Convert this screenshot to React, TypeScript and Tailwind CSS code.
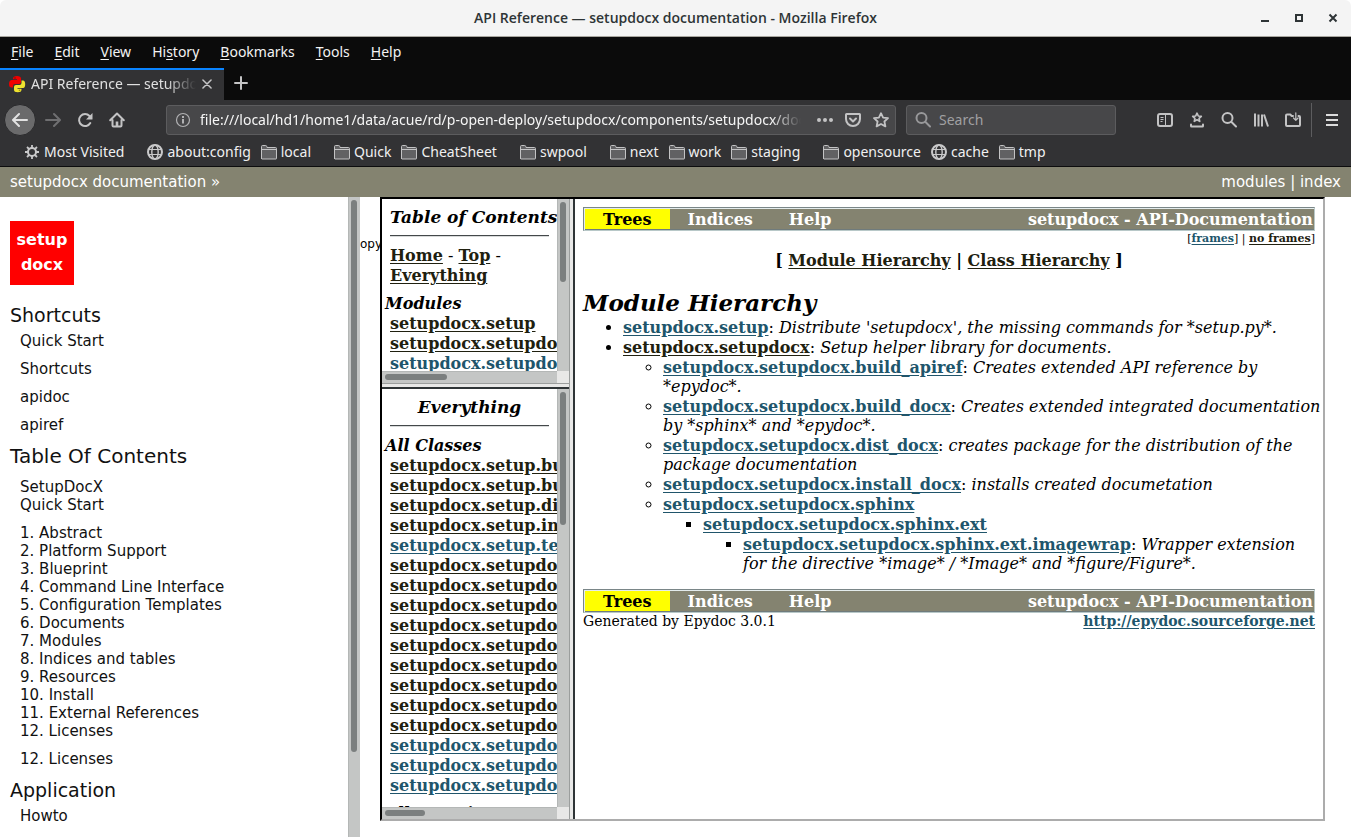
import type { ReactNode } from "react";

const moduleLinks = [
  { name: "setupdocx.setup", fresh: false },
  { name: "setupdocx.setupdocx", fresh: false },
  { name: "setupdocx.setupdocx.build_apiref", fresh: true },
];

const classLinks = [
  { name: "setupdocx.setup.build_docx", fresh: false },
  { name: "setupdocx.setup.build_apiref", fresh: false },
  { name: "setupdocx.setup.dist_docx", fresh: false },
  { name: "setupdocx.setup.install_docx", fresh: false },
  { name: "setupdocx.setup.testx", fresh: true },
  ...Array.from({ length: 9 }, () => ({ name: "setupdocx.setupdocx", fresh: false })),
  ...Array.from({ length: 3 }, () => ({ name: "setupdocx.setupdocx", fresh: true })),
];

const contents = [
  "Abstract",
  "Platform Support",
  "Blueprint",
  "Command Line Interface",
  "Configuration Templates",
  "Documents",
  "Modules",
  "Indices and tables",
  "Resources",
  "Install",
  "External References",
];

const menus = [
  ["", "F", "ile"],
  ["", "E", "dit"],
  ["", "V", "iew"],
  ["Hi", "s", "tory"],
  ["", "B", "ookmarks"],
  ["", "T", "ools"],
  ["", "H", "elp"],
];

type Mark = { icon: "gear" | "globe" | "folder"; label: string };
const bookmarkGroups: Mark[][] = [
  [{ icon: "gear", label: "Most Visited" }],
  [{ icon: "globe", label: "about:config" }, { icon: "folder", label: "local" }],
  [{ icon: "folder", label: "Quick" }, { icon: "folder", label: "CheatSheet" }],
  [{ icon: "folder", label: "swpool" }],
  [{ icon: "folder", label: "next" }, { icon: "folder", label: "work" }, { icon: "folder", label: "staging" }],
  [{ icon: "folder", label: "opensource" }, { icon: "globe", label: "cache" }, { icon: "folder", label: "tmp" }],
];

function Icon({ children, className = "h-4 w-4" }: { children: ReactNode; className?: string }) {
  return (
    <svg
      viewBox="0 0 16 16"
      className={`shrink-0 ${className}`}
      fill="none"
      stroke="currentColor"
      strokeWidth="2"
      strokeLinecap="round"
      strokeLinejoin="round"
      aria-hidden="true"
    >
      {children}
    </svg>
  );
}

function BookmarkIcon({ kind }: { kind: Mark["icon"] }) {
  if (kind === "gear")
    return (
      <Icon className="h-4 w-4 text-[#c9c9ca]">
        <circle cx="8" cy="8" r="4" />
        <path
          strokeWidth="1.8"
          strokeLinecap="butt"
          d="M8 4V1M8 12v3M4 8H1M12 8h3M5.2 5.2 3 3M10.8 10.8 13 13M5.2 10.8 3 13M10.8 5.2 13 3"
        />
      </Icon>
    );
  if (kind === "globe")
    return (
      <Icon className="h-4 w-4 text-[#c9c9ca]">
        <circle cx="8" cy="8" r="7" />
        <ellipse cx="8" cy="8" rx="3.2" ry="7" strokeWidth="1.4" />
        <path strokeWidth="1.2" d="M1.5 5.5h13M1.5 10.5h13" />
      </Icon>
    );
  return (
    <Icon className="h-4 w-4 text-[#c3c3c4]">
      <path
        strokeWidth="1"
        fill="#616163"
        d="M.5 14.500v-12q0-1 1-1h3.200q.8 0 1 .8l.3 1.200h8.500q1 0 1 1v10q0 .5-.5.5H1q-.5 0-.5-.5z"
      />
      <path strokeWidth="1" d="M1 5.500h14" />
    </Icon>
  );
}

function ALink({ fresh = false, children }: { fresh?: boolean; children: ReactNode }) {
  return (
    <a
      href="#"
      className={`font-bold underline underline-offset-2 ${fresh ? "text-[#20556b]" : "text-[#20200f]"}`}
    >
      {children}
    </a>
  );
}

function Rule() {
  return <hr className="my-2 h-0.5 border-t border-b border-t-[#44484a] border-b-[#d8dada]" />;
}

function GroupTitle({ children }: { children: ReactNode }) {
  return <h3 className="-ml-[5px] leading-[21px] font-bold italic">{children}</h3>;
}

function SideFrame({ children, thumb }: { children: ReactNode; thumb: ReactNode }) {
  return (
    <div className="flex min-h-0 flex-1">
      <div className="min-w-0 flex-1 overflow-hidden px-2 pt-2 whitespace-nowrap">{children}</div>
      <div className="w-3 shrink-0 border-l border-[#b4b7b6] bg-[#c4c6c5] pt-[3px] pl-0.5">{thumb}</div>
    </div>
  );
}

function BottomScroll({ thumb }: { thumb: ReactNode }) {
  return (
    <div className="flex h-3 shrink-0">
      <div className="flex flex-1 items-start border-t border-[#b4b7b6] bg-[#c4c6c5] pt-0.5 pl-[3px]">{thumb}</div>
      <div className="w-3 bg-[#e8e8e7]" />
    </div>
  );
}

function EpydocNav() {
  return (
    <nav className="flex h-6 border border-t-[#7a8688] border-r-[#b8c8c8] border-b-[#b8c8c8] border-l-[#7a8688] bg-[#848370] p-px leading-[22px] font-bold whitespace-nowrap text-white shadow-[inset_1px_1px_0_#e4ecec,inset_0_-1px_0_#6f7b7c]">
      <span className="bg-[#ffff00] px-[18px] text-black">Trees</span>
      <a href="#" className="px-[18px]">Indices</a>
      <a href="#" className="px-[18px]">Help</a>
      <span className="ml-auto">setupdocx - API-Documentation</span>
    </nav>
  );
}

function Entry({ name, fresh = true, children }: { name: string; fresh?: boolean; children?: ReactNode }) {
  return (
    <div className="pb-px leading-[19px] whitespace-nowrap">
      <ALink fresh={fresh}>{name}</ALink>
      {children && <>: <em>{children}</em></>}
    </div>
  );
}

function SideText({ children }: { children: ReactNode }) {
  return (
    <p className="mb-2.5 ml-2.5 leading-[18px]">
      <a href="#">{children}</a>
    </p>
  );
}

function TitleBar() {
  return (
    <header className="flex h-[37px] shrink-0 items-center rounded-t-md border-b border-[#a8a69f] bg-[#f4f4f4] px-2.5 text-[#2e3436]">
      <div className="flex-1" />
      <h1 className="font-['Open_Sans',sans-serif] text-sm font-semibold">
        API Reference — setupdocx documentation - Mozilla Firefox
      </h1>
      <div className="flex flex-1 justify-end gap-[18px]">
        <button aria-label="Minimize">
          <Icon><path strokeLinecap="butt" d="M4 11h8" /></Icon>
        </button>
        <button aria-label="Maximize">
          <Icon><path strokeLinejoin="miter" d="M5 5h6v6H5z" /></Icon>
        </button>
        <button aria-label="Close window">
          <Icon><path strokeLinecap="butt" d="m4.500 4.500 7 7M11.500 4.500l-7 7" /></Icon>
        </button>
      </div>
    </header>
  );
}

function Chrome() {
  return (
    <>
      <nav className="flex h-[31px] shrink-0 items-center gap-[21px] bg-[#0b0b0b] px-[11px] pb-0.5 text-sm text-[#f3f3f3]">
        {menus.map(([before, key, after]) => (
          <button key={after}>
            {before}
            <span className="underline underline-offset-2">{key}</span>
            {after}
          </button>
        ))}
      </nav>
      <div className="flex h-8 shrink-0 items-stretch bg-[#0b0b0b] text-sm text-[#e0e0e0]">
        <div className="flex w-56 items-center border-t-2 border-[#0a84ff] bg-[#323234] pr-3 pb-0.5 pl-2">
          <svg viewBox="0 0 18 18" className="mr-[5px] h-[18px] w-[18px] shrink-0" aria-hidden="true">
            <path
              fill="#f00000"
              d="M5 3.500Q5 1 9 1t4 2.500V7q0 2-2 2H7Q5 9 5 11v1.500H3.500Q1 12.500 1 9t2.500-4H9v-.7H5z"
            />
            <path
              fill="#efe32f"
              d="M13.500 5.500H15q2.200 0 2.200 3.800T15 13H9.500v.8h4v.9q0 2.500-3.800 2.500T6 14.700V12q0-2 2-2h3.500q2 0 2-2z"
            />
            <circle cx="7" cy="3" r=".8" fill="#900" />
            <circle cx="11.500" cy="15.200" r=".8" fill="#998f10" />
          </svg>
          <span className="flex-1 overflow-hidden mask-[linear-gradient(to_right,black_82%,transparent)] whitespace-nowrap">
            API Reference — setupdocx documentation
          </span>
          <button aria-label="Close tab" className="ml-1.5">
            <Icon className="h-2.5 w-2.5 text-[#c5c5c6]"><path strokeWidth="2.400" d="m1.500 1.500 13 13M14.500 1.500l-13 13" /></Icon>
          </button>
        </div>
        <button aria-label="New tab" className="ml-[9px] pb-0.5 text-[#c5c5c6]">
          <Icon><path d="M8 2v12M2 8h12" /></Icon>
        </button>
      </div>
      <div className="flex h-10 shrink-0 items-center bg-[#323234] pr-[11px] pl-1 text-sm text-[#c3c3c4]">
        <button
          aria-label="Back"
          className="flex h-8 w-8 items-center justify-center rounded-full border border-[#29292b] bg-[#6a6a6b] text-[#e2e2e2]"
        >
          <Icon><path d="M15 8H1.500M7 2 1 8l6 6" /></Icon>
        </button>
        <div className="ml-[9px] flex gap-4">
          <button aria-label="Forward" className="text-[#6f6f71]">
            <Icon><path d="M1 8h13.500M9 2l6 6-6 6" /></Icon>
          </button>
          <button aria-label="Reload">
            <Icon>
              <path d="M13.300 11A6 6 0 1 1 12.500 4l1 1" />
              <path fill="currentColor" stroke="none" d="M15.500 1v6q0 .5-.5.5H9z" />
            </Icon>
          </button>
          <button aria-label="Home">
            <Icon>
              <path d="M1.200 8.200 8 1.500l6.800 6.700M3.500 8v5.500q0 1 1 1h7q1 0 1-1V8" />
              <path strokeLinecap="butt" d="M8 14.500V9.500" strokeWidth="2.600" />
            </Icon>
          </button>
        </div>
        <div className="ml-[41px] flex h-[30px] min-w-0 flex-1 items-center rounded-[3px] border border-[#5c5c5e] bg-[#474749] pr-1.5 pl-2">
          <Icon className="h-4 w-4 text-[#b1b1b3]">
            <circle cx="8" cy="8" r="6.500" strokeWidth="1.200" />
            <path strokeLinecap="butt" d="M8 7v4.500M8 4v2" />
          </Icon>
          <input
            aria-label="Address"
            readOnly
            defaultValue="file:///local/hd1/home1/data/acue/rd/p-open-deploy/setupdocx/components/setupdocx/doc/build/html/api.html"
            className="mr-4 ml-[9px] min-w-0 flex-1 bg-transparent mask-[linear-gradient(to_right,black_95%,transparent)] text-[#f6f6f6] outline-none"
          />
          <div className="flex items-center gap-3">
            <button aria-label="Page actions">
              <Icon><path strokeWidth="4" d="M2 8h.01M8 8h.01M14 8h.01" /></Icon>
            </button>
            <button aria-label="Save to Pocket">
              <Icon>
                <path d="M1.500 2h13q.5 0 .5.500V7a7 7 0 0 1-14 0V2.500q0-.5.5-.5z" />
                <path d="m5 6.500 3 3 3-3" />
              </Icon>
            </button>
            <button aria-label="Bookmark this page">
              <Icon>
                <path
                  strokeWidth="1.800"
                  d="m8 1.200 2.100 4.400 4.900.6-3.600 3.300 1 4.900L8 12l-4.400 2.400 1-4.900L1 6.200l4.900-.6z"
                />
              </Icon>
            </button>
          </div>
        </div>
        <label className="ml-2.5 flex h-[30px] w-[210px] items-center rounded-[3px] border border-[#5c5c5e] bg-[#474749] px-2">
          <Icon className="h-4 w-4 text-[#98989a]"><circle cx="6.500" cy="6" r="5" /><path d="m10.500 10 4.500 4.500" /></Icon>
          <input
            aria-label="Search"
            placeholder="Search"
            className="ml-2 w-40 bg-transparent outline-none placeholder:text-[#a0a0a2]"
          />
        </label>
        <div className="ml-[41px] flex gap-4">
          <button aria-label="Sidebars">
            <Icon>
              <rect x="1" y="2" width="14" height="12" rx="2" />
              <path strokeWidth="1" strokeLinecap="butt" d="M8.500 2v12M3.500 5.500h3M3.500 7.500h3M3.500 9.500h2" />
            </Icon>
          </button>
          <button aria-label="Bookmarks menu">
            <Icon>
              <path
                strokeWidth="1.700"
                d="m8 1.200 1.300 2.800 3 .3-2.200 2 .6 3L8 7.800 5.300 9.300l.6-3-2.200-2 3-.3z"
              />
              <path d="M2 12.500V14q0 .6.6.6h10.800q.6 0 .6-.6v-1.500" />
            </Icon>
          </button>
          <button aria-label="Find">
            <Icon><circle cx="6.500" cy="6" r="5" /><path d="m10.500 10 4.500 4.500" /></Icon>
          </button>
          <button aria-label="Library">
            <Icon><path strokeLinecap="butt" d="M2 1.500v13M5.500 2.500v12M9 2.500v12M11 2.500l4 12" /></Icon>
          </button>
          <button aria-label="Downloads">
            <Icon>
              <path d="M8 4H6.500l-1-1.500H2q-1 0-1 1V13q0 1 1 1h12q1 0 1-1V5q0-1-1-1h-.5" />
              <path strokeWidth="1.200" d="M10.800.8V8M8.500 6l2.300 2.300L13.100 6" />
            </Icon>
          </button>
        </div>
        <div className="mr-3 ml-2.5 h-[34px] w-px bg-[#5d5d5f]" />
        <button aria-label="Menu">
          <Icon className="h-4 w-4 text-[#dcdcdc]"><path strokeLinecap="butt" d="M2 3h12M2 8h12M2 13h12" /></Icon>
        </button>
      </div>
      <div className="flex h-[27px] shrink-0 items-center gap-[23px] border-b border-[#0c0c0d] bg-[#323234] pb-0.5 pl-6 text-sm text-[#f0f0f0]">
        {bookmarkGroups.map((group) => (
          <div key={group[0].label} className="flex gap-2.5">
            {group.map((mark) => (
              <a href="#" key={mark.label} className="flex items-center gap-1 whitespace-nowrap">
                <BookmarkIcon kind={mark.icon} />
                {mark.label}
              </a>
            ))}
          </div>
        ))}
      </div>
    </>
  );
}

function Sidebar() {
  return (
    <aside className="flex w-[360px] shrink-0 overflow-hidden text-[15px] text-[#111]">
      <div className="flex-1 overflow-hidden pt-6 pl-2.5">
        <a
          href="#"
          className="flex h-16 w-16 flex-col items-center bg-[#ff0000] pt-1.5 text-base leading-[25px] font-bold text-white"
        >
          <span>setup</span>
          <span>docx</span>
        </a>
        <h3 className="mt-[18px] mb-[5px] text-[19px] leading-6">Shortcuts</h3>
        <SideText>Quick Start</SideText>
        <SideText>Shortcuts</SideText>
        <SideText>apidoc</SideText>
        <SideText>apiref</SideText>
        <h3 className="mb-2.5 text-xl leading-6">Table Of Contents</h3>
        <ul className="mb-2.5 ml-2.5 leading-[18px]">
          <li><a href="#">SetupDocX</a></li>
          <li><a href="#">Quick Start</a></li>
        </ul>
        <ul className="mb-2.5 ml-2.5 leading-[18px]">
          {contents.map((title, i) => (
            <li key={title}><a href="#">{i + 1}. {title}</a></li>
          ))}
          <li><a href="#">12. Licenses</a></li>
        </ul>
        <SideText>12. Licenses</SideText>
        <h3 className="mb-[5px] text-[19px] leading-6">Application</h3>
        <SideText>Howto</SideText>
      </div>
      <div className="w-3 border-l border-[#b4b7b6] bg-[#c4c6c5] pt-[3px] pl-0.5">
        <div className="h-[552px] w-1.5 rounded-full bg-[#7b7f7f]" />
      </div>
    </aside>
  );
}

function LinkList({ items }: { items: { name: string; fresh: boolean }[] }) {
  return (
    <ul>
      {items.map((item, i) => (
        <li key={i}><ALink fresh={item.fresh}>{item.name}</ALink></li>
      ))}
    </ul>
  );
}

export default function App() {
  return (
    <div className="bg-white font-['Noto_Sans',sans-serif]">
      <div className="flex h-screen flex-col overflow-hidden">
        <TitleBar />
        <Chrome />
        <div className="flex h-[30px] shrink-0 items-center justify-between bg-[#848370] px-2.5 font-['DejaVu_Sans',sans-serif] text-[15px] text-white">
          <span><a href="#">setupdocx documentation</a> »</span>
          <span><a href="#">modules</a> | <a href="#">index</a></span>
        </div>
        <main className="flex min-h-0 flex-1 font-['DejaVu_Sans',sans-serif]">
          <Sidebar />
          <div className="w-5 shrink-0 overflow-hidden pt-[38px] text-xs leading-[18px]">opy</div>
          <div className="mr-[26px] mb-4 flex min-w-0 flex-1 border-2 border-t-black border-r-[#acacac] border-b-[#acacac] border-l-black font-['DejaVu_Serif',serif] text-base leading-5 text-black">
            <div className="flex w-[187px] shrink-0 flex-col">
              <section className="flex h-[184px] shrink-0 flex-col">
                <SideFrame thumb={<div className="h-20 w-1.5 rounded-full bg-[#7b7f7f]" />}>
                  <h2 className="text-[17px] font-bold italic">Table of Contents</h2>
                  <Rule />
                  <p className="pt-px pb-[7px]"><ALink>Home</ALink> - <ALink>Top</ALink> -<br /><ALink>Everything</ALink></p>
                  <GroupTitle>Modules</GroupTitle>
                  <LinkList items={moduleLinks} />
                </SideFrame>
                <BottomScroll thumb={<div className="h-1.5 w-[62px] rounded-full bg-[#7b7f7f]" />} />
              </section>
              <div className="h-1.5 shrink-0 border-t border-b-2 border-t-[#9b9e9d] border-b-[#2e3436] bg-[#e8e8e7]" />
              <section className="flex min-h-0 flex-1 flex-col">
                <SideFrame thumb={<div className="h-[133px] w-1.5 rounded-full bg-[#7b7f7f]" />}>
                  <h2 className="text-center text-[17px] font-bold italic">Everything</h2>
                  <Rule />
                  <GroupTitle>All Classes</GroupTitle>
                  <LinkList items={classLinks} />
                  <div className="pt-[7px]"><GroupTitle>All Functions</GroupTitle></div>
                </SideFrame>
                <BottomScroll thumb={<div className="h-1.5 w-10 rounded-full bg-[#7b7f7f]" />} />
              </section>
            </div>
            <div className="w-1.5 shrink-0 border-r-2 border-l border-r-[#2e3436] border-l-[#9b9e9d] bg-[#e8e8e7]" />
            <article className="min-w-0 flex-1 overflow-hidden p-2">
              <EpydocNav />
              <p className="text-right text-[11px] leading-4">
                [<ALink fresh>frames</ALink>] | <ALink>no frames</ALink>]
              </p>
              <p className="mt-1 text-center font-bold">
                [ <ALink>Module Hierarchy</ALink> | <ALink>Class Hierarchy</ALink> ]
              </p>
              <h1 className="mt-[18px] mb-0.5 text-[23px] leading-[27px] font-bold italic">Module Hierarchy</h1>
              <ul className="list-disc pl-10">
                <li><Entry name="setupdocx.setup">Distribute 'setupdocx', the missing commands for *setup.py*.</Entry></li>
                <li>
                  <Entry name="setupdocx.setupdocx" fresh={false}>Setup helper library for documents.</Entry>
                  <ul className="list-[circle] pl-10">
                    <li><Entry name="setupdocx.setupdocx.build_apiref">Creates extended API reference by<br />*epydoc*.</Entry></li>
                    <li><Entry name="setupdocx.setupdocx.build_docx">Creates extended integrated documentation<br />by *sphinx* and *epydoc*.</Entry></li>
                    <li><Entry name="setupdocx.setupdocx.dist_docx">creates package for the distribution of the<br />package documentation</Entry></li>
                    <li><Entry name="setupdocx.setupdocx.install_docx">installs created documetation</Entry></li>
                    <li>
                      <Entry name="setupdocx.setupdocx.sphinx" />
                      <ul className="list-[square] pl-10">
                        <li>
                          <Entry name="setupdocx.setupdocx.sphinx.ext" />
                          <ul className="list-[square] pl-10">
                            <li><Entry name="setupdocx.setupdocx.sphinx.ext.imagewrap">Wrapper extension<br />for the directive *image* / *Image* and *figure/Figure*.</Entry></li>
                          </ul>
                        </li>
                      </ul>
                    </li>
                  </ul>
                </li>
              </ul>
              <div className="mt-[15px]"><EpydocNav /></div>
              <div className="flex justify-between text-[14px] leading-4">
                <span>Generated by Epydoc 3.0.1</span>
                <ALink fresh>http://epydoc.sourceforge.net</ALink>
              </div>
            </article>
          </div>
        </main>
      </div>
    </div>
  );
}
